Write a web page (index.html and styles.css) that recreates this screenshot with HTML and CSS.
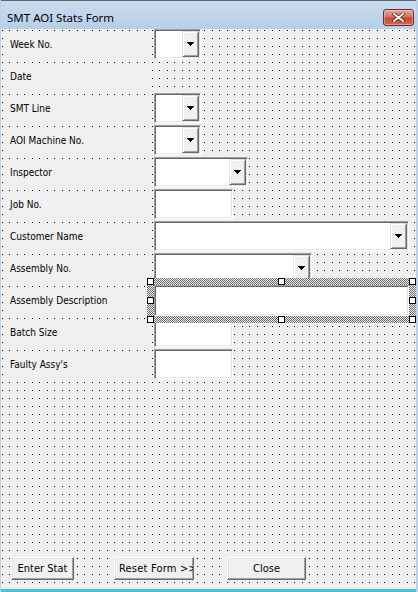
FILE: index.html
```html
<!DOCTYPE html>
<html>
<head>
<meta charset="utf-8">
<title>SMT AOI Stats Form</title>
<link rel="stylesheet" href="styles.css">
</head>
<body>
<div class="window">
  <div class="titlebar">
    <span class="title">SMT AOI Stats Form</span>
    <div class="close">
      <svg width="13" height="9" viewBox="0 0 13 9"><path d="M2 1 L11 8 M11 1 L2 8" stroke="#4a1a14" stroke-width="3.4" stroke-linecap="round"/><path d="M2 1 L11 8 M11 1 L2 8" stroke="#fff" stroke-width="2" stroke-linecap="round"/></svg>
    </div>
  </div>
  <div class="form">
    <div class="rows">
      <div class="row"><div class="label">Week No.</div><div class="combo w47"><div class="field"></div><div class="dd"><svg width="7" height="4" viewBox="0 0 7 4" shape-rendering="crispEdges"><rect x="0" y="0" width="7" height="1"/><rect x="1" y="1" width="5" height="1"/><rect x="2" y="2" width="3" height="1"/><rect x="3" y="3" width="1" height="1"/></svg></div></div></div>
      <div class="row"><div class="label">Date</div></div>
      <div class="row"><div class="label">SMT Line</div><div class="combo w47"><div class="field"></div><div class="dd"><svg width="7" height="4" viewBox="0 0 7 4" shape-rendering="crispEdges"><rect x="0" y="0" width="7" height="1"/><rect x="1" y="1" width="5" height="1"/><rect x="2" y="2" width="3" height="1"/><rect x="3" y="3" width="1" height="1"/></svg></div></div></div>
      <div class="row"><div class="label">AOI Machine No.</div><div class="combo w47"><div class="field"></div><div class="dd"><svg width="7" height="4" viewBox="0 0 7 4" shape-rendering="crispEdges"><rect x="0" y="0" width="7" height="1"/><rect x="1" y="1" width="5" height="1"/><rect x="2" y="2" width="3" height="1"/><rect x="3" y="3" width="1" height="1"/></svg></div></div></div>
      <div class="row"><div class="label">Inspector</div><div class="combo w94"><div class="field"></div><div class="dd"><svg width="7" height="4" viewBox="0 0 7 4" shape-rendering="crispEdges"><rect x="0" y="0" width="7" height="1"/><rect x="1" y="1" width="5" height="1"/><rect x="2" y="2" width="3" height="1"/><rect x="3" y="3" width="1" height="1"/></svg></div></div></div>
      <div class="row"><div class="label">Job No.</div><div class="textbox w79"></div></div>
      <div class="row"><div class="label">Customer Name</div><div class="combo w255"><div class="field"></div><div class="dd"><svg width="7" height="4" viewBox="0 0 7 4" shape-rendering="crispEdges"><rect x="0" y="0" width="7" height="1"/><rect x="1" y="1" width="5" height="1"/><rect x="2" y="2" width="3" height="1"/><rect x="3" y="3" width="1" height="1"/></svg></div></div></div>
      <div class="row"><div class="label">Assembly No.</div><div class="combo w158"><div class="field"></div><div class="dd"><svg width="7" height="4" viewBox="0 0 7 4" shape-rendering="crispEdges"><rect x="0" y="0" width="7" height="1"/><rect x="1" y="1" width="5" height="1"/><rect x="2" y="2" width="3" height="1"/><rect x="3" y="3" width="1" height="1"/></svg></div></div></div>
      <div class="row"><div class="label">Assembly Description</div>
        <div class="selected">
          <div class="textbox w255"></div>
          <span class="handle h-tl"></span><span class="handle h-tc"></span><span class="handle h-tr"></span>
          <span class="handle h-ml"></span><span class="handle h-mr"></span>
          <span class="handle h-bl"></span><span class="handle h-bc"></span><span class="handle h-br"></span>
        </div>
      </div>
      <div class="row"><div class="label">Batch Size</div><div class="textbox w79"></div></div>
      <div class="row"><div class="label">Faulty Assy's</div><div class="textbox w79"></div></div>
    </div>
    <div class="buttons">
      <div class="btn b-enter">Enter Stat</div>
      <div class="btn b-reset">Reset Form &gt;&gt;</div>
      <div class="btn b-close">Close</div>
    </div>
  </div>
  <div class="bottom"></div>
</div>
</body>
</html>
```
FILE: styles.css
```css
* { box-sizing: border-box; }
html, body { margin: 0; padding: 0; }
body {
  width: 418px;
  height: 592px;
  overflow: hidden;
  background: #ffffff;
  font-family: "DejaVu Sans Condensed", "DejaVu Sans", sans-serif;
  font-size: 10px;
  color: #000;
}
.window {
  width: 418px;
  height: 592px;
  display: flex;
  flex-direction: column;
  background: #b9d1ea;
  border-left: 1px solid #b9d1ea;
  border-right: 2px solid #b9d1ea;
}
.titlebar {
  height: 29px;
  flex: none;
  display: flex;
  align-items: flex-start;
  background: linear-gradient(#c8dbf0, #b8cfe9);
  border-top: 1px solid #60656b;
}
.title {
  font-family: "Noto Sans", "Open Sans", sans-serif;
  font-size: 11.5px;
  margin: 9px 0 0 6px;
  color: #000;
}
.close {
  margin: 8px 2px 0 auto;
  width: 31px;
  height: 17px;
  border: 1px solid #6b2b22;
  border-radius: 3px;
  background: linear-gradient(#e8a69a 0%, #d7705f 45%, #c44a35 55%, #cf6a52 100%);
  box-shadow: inset 0 0 0 1px rgba(255,255,255,0.35);
  display: flex;
  align-items: center;
  justify-content: center;
}
.form {
  flex: 1;
  display: flex;
  flex-direction: column;
  background-color: #f0f0f0;
  background-image:
    conic-gradient(at 1px 1px, transparent 270deg, #000 270deg),
    conic-gradient(at 1px 1px, transparent 270deg, #000 270deg);
  background-size: 15px 8px, 15px 8px;
  background-position: 1px 1px, 8px 1px;
}
.rows {
  display: flex;
  flex-direction: column;
  gap: 2px;
}
.row {
  height: 30px;
  display: flex;
  align-items: center;
}
.label {
  width: 146px;
  height: 26px;
  margin-left: 3px;
  margin-right: 4px;
  padding-left: 6px;
  display: flex;
  align-items: center;
  background: #f0f0f0;
}
.combo, .textbox {
  height: 30px;
  background: #fff;
  border: 1px solid;
  border-color: #a0a0a0 #ffffff #ffffff #a0a0a0;
  box-shadow: inset 1px 1px 0 #696969, inset -1px -1px 0 #e3e3e3;
}
.combo {
  display: flex;
  padding: 1px;
}
.combo .field { flex: 1; }
.dd {
  width: 17px;
  flex: none;
  background: #f0f0f0;
  border: 1px solid;
  border-color: #e3e3e3 #696969 #696969 #e3e3e3;
  box-shadow: inset 1px 1px 0 #fff, inset -1px -1px 0 #a0a0a0;
  display: flex;
  align-items: center;
  justify-content: center;
}
.dd svg { display: block; fill: #000; }
.w47 { width: 47px; }
.w79 { width: 79px; }
.w94 { width: 94px; }
.w158 { width: 158px; }
.w255 { width: 255px; }
.selected {
  position: relative;
  margin: -7px;
  padding: 7px;
  background: repeating-conic-gradient(#6a6a6a 0 25%, #f0f0f0 0 50%) 0 0 / 2px 2px;
}
.selected .textbox { height: 31px; }
.handle {
  position: absolute;
  width: 7px;
  height: 7px;
  background: #fff;
  border: 1px solid #000;
}
.h-tl { left: 0; top: 0; }
.h-tc { left: 131px; top: 0; }
.h-tr { right: 0; top: 0; }
.h-ml { left: 0; top: 19px; }
.h-mr { right: 0; top: 19px; }
.h-bl { left: 0; bottom: 0; }
.h-bc { left: 131px; bottom: 0; }
.h-br { right: 0; bottom: 0; }
.buttons {
  margin-top: auto;
  margin-bottom: 9px;
  display: flex;
  padding-left: 10px;
  font-size: 11px;
}
.btn {
  height: 23px;
  background: #f0f0f0;
  border: 1px solid;
  border-color: #fff #696969 #696969 #fff;
  box-shadow: inset -1px -1px 0 #a0a0a0, inset 1px 1px 0 #e3e3e3;
  display: flex;
  align-items: center;
  justify-content: center;
  white-space: nowrap;
  overflow: hidden;
}
.b-enter { width: 63px; }
.b-reset { width: 80px; margin-left: 40px; justify-content: flex-start; padding-left: 4px; letter-spacing: 0.2px; }
.b-close { width: 79px; margin-left: 33px; }
.bottom {
  height: 3px;
  flex: none;
  background: #3fc3e6;
}
```
